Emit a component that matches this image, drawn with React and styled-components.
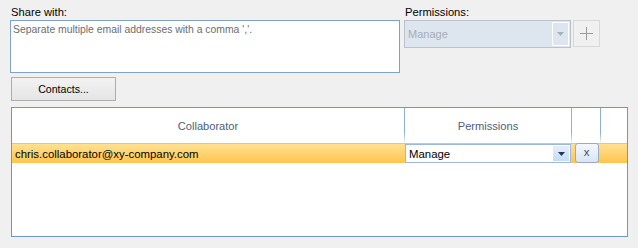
import React from 'react';
import styled, { createGlobalStyle } from 'styled-components';

const GlobalStyle = createGlobalStyle`
    html, body {
        margin: 0;
        padding: 0;
        background: #f0f0f0;
    }
    body {
        font-family: "Liberation Sans", Arial, sans-serif;
        font-size: 11px;
        color: #000;
    }
`;

const Page = styled.div`
    width: 638px;
    height: 248px;
    box-sizing: border-box;
    padding: 5px 0 0 10px;
    display: flex;
    flex-direction: column;
`;

const TopRow = styled.div`
    display: flex;
    gap: 4px;
`;

const Field = styled.div`
    display: flex;
    flex-direction: column;
    width: ${p => p.$width}px;
`;

const Label = styled.label`
    height: 15px;
    line-height: 14px;
    font-size: 11.2px;
    padding-left: 1px;
`;

const TextArea = styled.div`
    box-sizing: border-box;
    height: 53px;
    background: #fff;
    border: 1px solid #7da2ce;
    color: #6d6d6d;
    font-size: 10.4px;
    padding: 2px 2px;
    line-height: 14px;
`;

const PermRow = styled.div`
    display: flex;
    gap: 2px;
`;

const DisabledSelect = styled.div`
    box-sizing: border-box;
    width: 167px;
    height: 28px;
    background: #dde6ef;
    border: 1px solid #b9c3cd;
    display: flex;
    align-items: center;
    justify-content: space-between;
    padding: 1px 1px 1px 3px;
    color: #a5adb5;
    font-size: 11px;
`;

const DisabledArrow = styled.div`
    box-sizing: border-box;
    width: 17px;
    height: 24px;
    border: 1px solid #fff;
    display: flex;
    align-items: center;
    justify-content: center;
`;

const PlusButton = styled.div`
    box-sizing: border-box;
    width: 27px;
    height: 27px;
    border: 1px solid #d8d8d8;
    display: flex;
    align-items: center;
    justify-content: center;
`;

const ContactsButton = styled.button`
    box-sizing: border-box;
    margin: 4px 0 0 1px;
    width: 105px;
    height: 24px;
    background: linear-gradient(#f2f2f2, #e5e5e5);
    border: 1px solid #adadad;
    font-family: inherit;
    font-size: 10.6px;
    color: #000;
    padding: 0;
`;

const Grid = styled.div`
    box-sizing: border-box;
    margin: 6px 0 0 1px;
    width: 617px;
    height: 130px;
    background: #fff;
    border: 1px solid #6f96c8;
    display: grid;
    grid-template-columns: 393px 167px 29px 1fr;
    grid-template-rows: 35px 20px;
    align-content: start;
`;

const HeaderCell = styled.div`
    display: flex;
    align-items: center;
    justify-content: center;
    color: #4d6078;
    font-size: 11.1px;
    padding-top: 1px;
    border-right: ${p => (p.$last ? 'none' : '1px solid')};
    border-image: linear-gradient(#8fb0d6 70%, #ffffff) 1;
`;

const RowCell = styled.div`
    display: flex;
    align-items: center;
    background: linear-gradient(#ffe191, #ffc54f);
    border-top: 1px solid #f5c26a;
    padding-left: ${p => p.$pad || 0}px;
    justify-content: ${p => p.$center ? 'center' : 'flex-start'};
    font-size: 11.4px;
    color: #000;
`;

const RowSelect = styled.div`
    box-sizing: border-box;
    width: 166px;
    height: 19px;
    background: #fff;
    border: 1px solid #9fb8d9;
    display: flex;
    align-items: center;
    justify-content: space-between;
    padding: 1px 1px 1px 3px;
    font-size: 11.4px;
`;

const RowArrow = styled.div`
    width: 16px;
    height: 15px;
    background: linear-gradient(#e3eefb, #c6dcf5);
    display: flex;
    align-items: center;
    justify-content: center;
`;

const RemoveButton = styled.div`
    box-sizing: border-box;
    width: 24px;
    height: 20px;
    margin-top: -1px;
    border: 1px solid #97abc8;
    border-radius: 3px;
    background: linear-gradient(#f4f8fd, #d8e5f4);
    display: flex;
    align-items: center;
    justify-content: center;
    color: #3c4e6b;
    font-size: 11.4px;
    padding-bottom: 2px;
`;

const Arrow = ({ color }) => (
    <svg width="7" height="4" viewBox="0 0 7 4">
        <path d="M0 0 H7 L3.5 4 Z" fill={color} />
    </svg>
);

const Plus = () => (
    <svg width="13" height="13" viewBox="0 0 13 13">
        <path d="M6.5 0 V13 M0 6.5 H13" stroke="#9a9a9a" strokeWidth="1" />
    </svg>
);

export default function App() {
    return (
        <>
            <GlobalStyle />
            <Page>
                <TopRow>
                    <Field $width={390}>
                        <Label>Share with:</Label>
                        <TextArea>Separate multiple email addresses with a comma ','.</TextArea>
                    </Field>
                    <Field $width={200}>
                        <Label>Permissions:</Label>
                        <PermRow>
                            <DisabledSelect>
                                Manage
                                <DisabledArrow><Arrow color="#a8b0b8" /></DisabledArrow>
                            </DisabledSelect>
                            <PlusButton><Plus /></PlusButton>
                        </PermRow>
                    </Field>
                </TopRow>
                <ContactsButton>Contacts...</ContactsButton>
                <Grid>
                    <HeaderCell>Collaborator</HeaderCell>
                    <HeaderCell>Permissions</HeaderCell>
                    <HeaderCell />
                    <HeaderCell $last />
                    <RowCell $pad={3}>chris.collaborator@xy-company.com</RowCell>
                    <RowCell>
                        <RowSelect>
                            Manage
                            <RowArrow><Arrow color="#1e395b" /></RowArrow>
                        </RowSelect>
                    </RowCell>
                    <RowCell $center>
                        <RemoveButton>x</RemoveButton>
                    </RowCell>
                    <RowCell />
                </Grid>
            </Page>
        </>
    );
}
